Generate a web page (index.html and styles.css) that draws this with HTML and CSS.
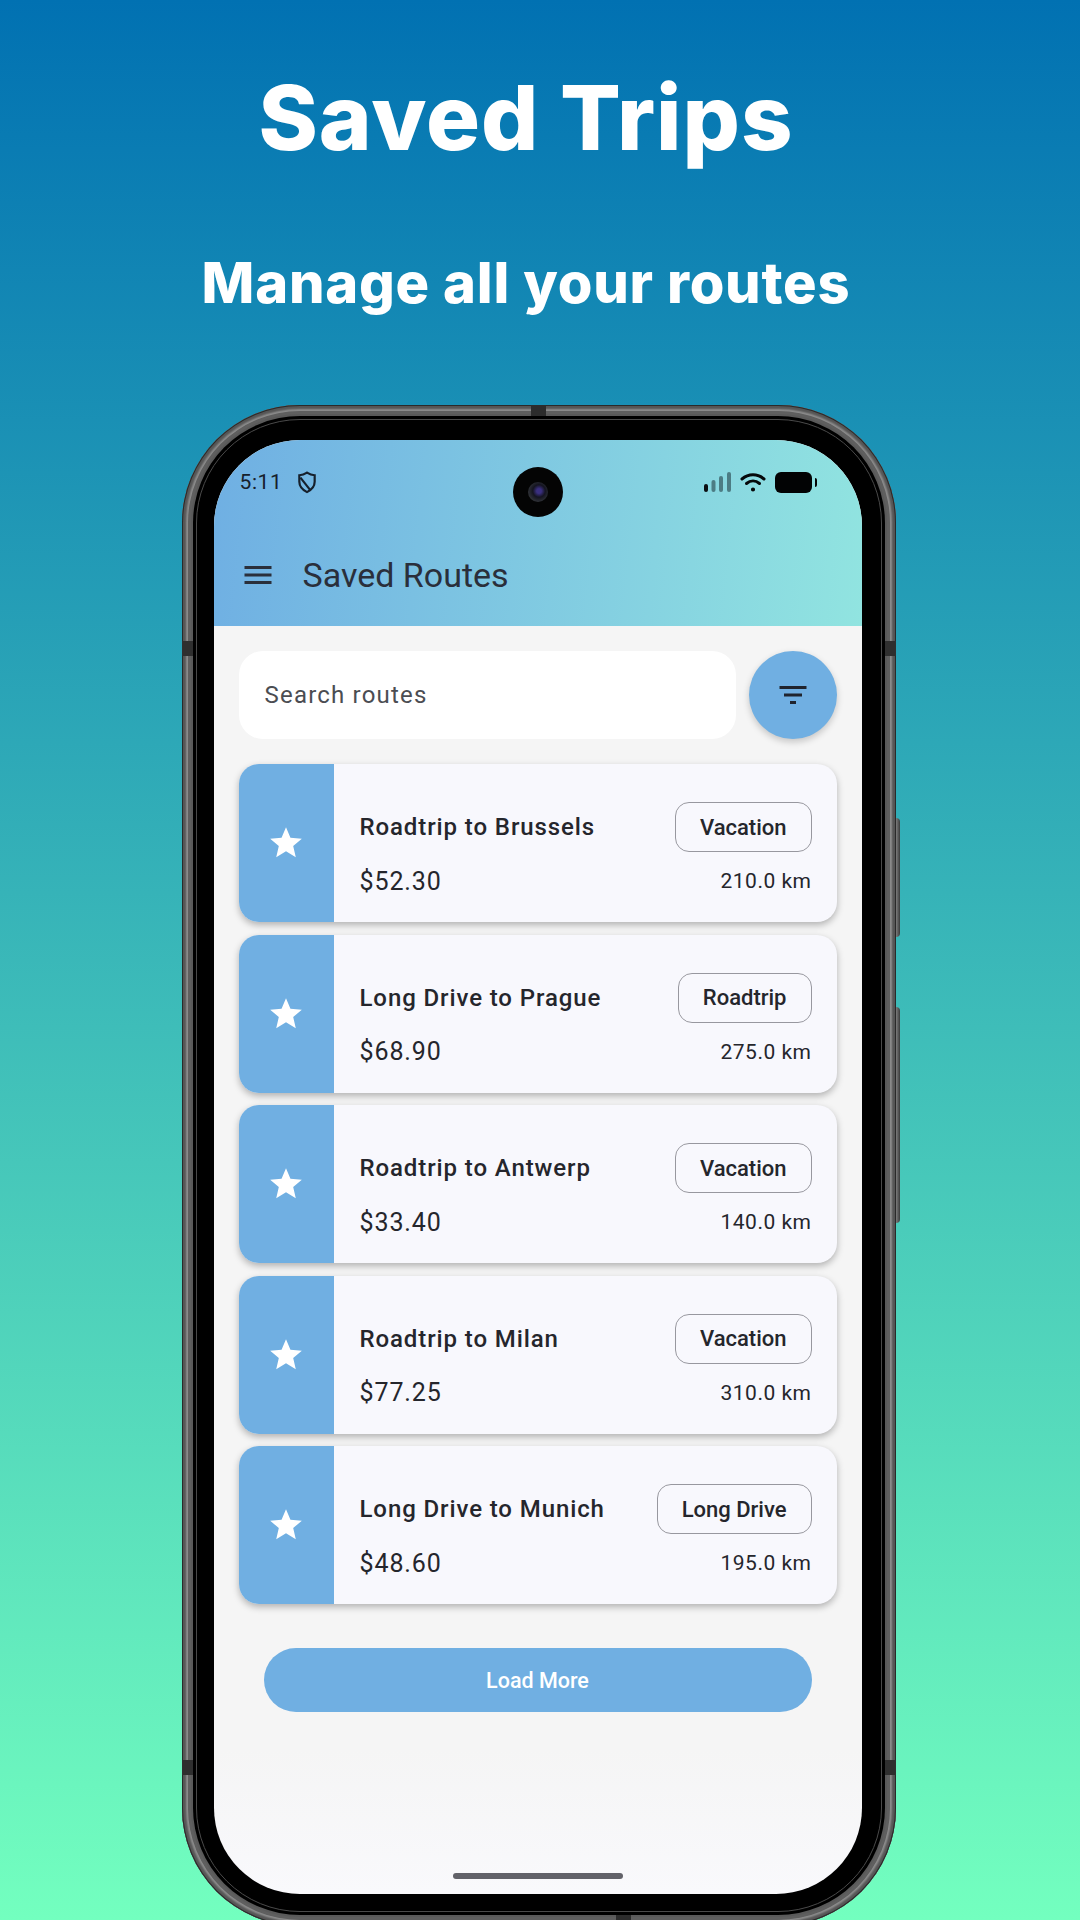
FILE: index.html
```html
<!DOCTYPE html>
<html lang="en">
<head>
  <meta charset="UTF-8">
  <title>Saved Trips</title>
  <link rel="stylesheet" href="styles.css">
</head>
<body>

  <header class="hero">
    <h1>Saved Trips</h1>
    <h2>Manage all your routes</h2>
  </header>

  <div class="phone">
    <span class="notch notch-top"></span>
    <span class="notch notch-bottom"></span>
    <span class="band-break break-left-top"></span>
    <span class="band-break break-right-top"></span>
    <span class="band-break break-left-bottom"></span>
    <span class="band-break break-right-bottom"></span>
    <span class="side-btn btn-power"></span>
    <span class="side-btn btn-volume"></span>

    <div class="bezel">
      <div class="screen">
        <span class="camera"><span class="lens"></span></span>

        <div class="appbar">
          <div class="status">
            <div class="status-left">
              <span class="clock">5:11</span>
              <svg class="shield" viewBox="0 0 18 21" width="20" height="23" fill="none" stroke="#16202c" stroke-width="2">
                <path d="M9 1.5c2.4 1.5 4.6 2.2 7 2.4v6c0 4.300-2.800 7.300-7 9.400-4.200-2.100-7-5.100-7-9.400v-6c2.400-.2 4.600-.9 7-2.400z"/>
                <path d="M3 6l9 11.500"/>
              </svg>
            </div>
            <div class="status-right">
              <svg viewBox="0 0 27 20" width="27" height="20">
                <rect x="0" y="12" width="4" height="8" rx="2" fill="#0b0f12"/>
                <rect x="7.500" y="8" width="4" height="12" rx="2" fill="#4c7c84"/>
                <rect x="15" y="4" width="4" height="16" rx="2" fill="#4c7c84"/>
                <rect x="23" y="0" width="4" height="20" rx="2" fill="#4c7c84"/>
              </svg>
              <svg viewBox="0 0 26 20" width="26" height="20" fill="none" stroke="#05080a" stroke-width="3" stroke-linecap="round">
                <path d="M2 7c6.500-5.600 15.500-5.600 22 0"/>
                <path d="M6.500 11.500c4-3.300 9-3.300 13 0"/>
                <circle cx="13" cy="17.500" r="1.300" fill="#05080a" stroke-width="1.600"/>
              </svg>
              <span class="battery"></span>
            </div>
          </div>
          <div class="toolbar">
            <svg viewBox="0 0 24 24" width="36" height="36" fill="#2a2f3b">
              <path d="M3 18h18v-2H3v2zm0-5h18v-2H3v2zm0-7v2h18V6H3z"/>
            </svg>
            <span class="toolbar-title">Saved Routes</span>
          </div>
        </div>

        <main class="content">
          <div class="search-row">
            <div class="search">Search routes</div>
            <button class="filter-btn">
              <svg viewBox="0 0 24 24" width="36" height="36" fill="#20242e">
                <path d="M10 18h4v-2h-4v2zM3 6v2h18V6H3zm3 7h12v-2H6v2z"/>
              </svg>
            </button>
          </div>

          <div class="route-list">
            <div class="route-card">
              <div class="route-mark">
                <svg viewBox="0 0 24 24" width="38" height="38" fill="#fff"><path d="M12 17.270L18.180 21l-1.640-7.030L22 9.240l-7.190-.61L12 2 9.190 8.630 2 9.240l5.460 4.730L5.820 21z"/></svg>
              </div>
              <div class="route-body">
                <div class="route-row">
                  <span class="route-name">Roadtrip to Brussels</span>
                  <span class="chip">Vacation</span>
                </div>
                <div class="route-row route-row-low">
                  <span class="route-price">$52.30</span>
                  <span class="route-dist">210.0 km</span>
                </div>
              </div>
            </div>

            <div class="route-card">
              <div class="route-mark">
                <svg viewBox="0 0 24 24" width="38" height="38" fill="#fff"><path d="M12 17.270L18.180 21l-1.640-7.030L22 9.240l-7.190-.61L12 2 9.190 8.630 2 9.240l5.460 4.730L5.820 21z"/></svg>
              </div>
              <div class="route-body">
                <div class="route-row">
                  <span class="route-name">Long Drive to Prague</span>
                  <span class="chip">Roadtrip</span>
                </div>
                <div class="route-row route-row-low">
                  <span class="route-price">$68.90</span>
                  <span class="route-dist">275.0 km</span>
                </div>
              </div>
            </div>

            <div class="route-card">
              <div class="route-mark">
                <svg viewBox="0 0 24 24" width="38" height="38" fill="#fff"><path d="M12 17.270L18.180 21l-1.640-7.030L22 9.240l-7.190-.61L12 2 9.190 8.630 2 9.240l5.460 4.730L5.820 21z"/></svg>
              </div>
              <div class="route-body">
                <div class="route-row">
                  <span class="route-name">Roadtrip to Antwerp</span>
                  <span class="chip">Vacation</span>
                </div>
                <div class="route-row route-row-low">
                  <span class="route-price">$33.40</span>
                  <span class="route-dist">140.0 km</span>
                </div>
              </div>
            </div>

            <div class="route-card">
              <div class="route-mark">
                <svg viewBox="0 0 24 24" width="38" height="38" fill="#fff"><path d="M12 17.270L18.180 21l-1.640-7.030L22 9.240l-7.190-.61L12 2 9.190 8.630 2 9.240l5.460 4.730L5.820 21z"/></svg>
              </div>
              <div class="route-body">
                <div class="route-row">
                  <span class="route-name">Roadtrip to Milan</span>
                  <span class="chip">Vacation</span>
                </div>
                <div class="route-row route-row-low">
                  <span class="route-price">$77.25</span>
                  <span class="route-dist">310.0 km</span>
                </div>
              </div>
            </div>

            <div class="route-card">
              <div class="route-mark">
                <svg viewBox="0 0 24 24" width="38" height="38" fill="#fff"><path d="M12 17.270L18.180 21l-1.640-7.030L22 9.240l-7.190-.61L12 2 9.190 8.630 2 9.240l5.460 4.730L5.820 21z"/></svg>
              </div>
              <div class="route-body">
                <div class="route-row">
                  <span class="route-name">Long Drive to Munich</span>
                  <span class="chip">Long Drive</span>
                </div>
                <div class="route-row route-row-low">
                  <span class="route-price">$48.60</span>
                  <span class="route-dist">195.0 km</span>
                </div>
              </div>
            </div>
          </div>

          <button class="load-more">Load More</button>
        </main>

        <span class="home-bar"></span>
      </div>
    </div>
  </div>

</body>
</html>
```

FILE: styles.css
```css
html, body {
  margin: 0;
  padding: 0;
}

body {
  width: 1080px;
  height: 1920px;
  overflow: hidden;
  display: flex;
  flex-direction: column;
  align-items: center;
  background: linear-gradient(180deg, #0171b2 0%, #73ffbf 100%);
  font-family: Roboto, "Liberation Sans", sans-serif;
}

/* top heading */
.hero {
  height: 405px;
  padding-right: 28px;
  flex-shrink: 0;
  text-align: center;
  color: #fff;
  font-family: Inter, "Noto Sans", sans-serif;
}

.hero h1 {
  margin: 0;
  padding-top: 64px;
  font-size: 90px;
  line-height: 108px;
  font-weight: 800;
  letter-spacing: 1px;
}

.hero h2 {
  margin: 0;
  padding-top: 77px;
  font-size: 56px;
  line-height: 68px;
  font-weight: 800;
  letter-spacing: 0.8px;
}

/* phone body */
.phone {
  position: relative;
  flex-shrink: 0;
  width: 714px;
  height: 1521px;
  margin-right: 3px;
  padding: 11px;
  box-sizing: border-box;
  border-radius: 118px;
  background: #5a5a5a;
  box-shadow:
    inset 0 0 0 1px #2a2a2a,
    inset 0 0 2px 4px #555,
    inset 0 0 0 6px #8e8e8e,
    inset 0 0 0 9px #5f5f5f;
}

.bezel {
  position: relative;
  height: 100%;
  padding: 24px 21px 21px;
  box-sizing: border-box;
  border-radius: 107px;
  background: #000;
}

.bezel::before {
  content: "";
  position: absolute;
  inset: 3px;
  border: 1px solid #4a4a4a;
  border-radius: 104px;
}

.notch {
  position: absolute;
  width: 15px;
  height: 12px;
  background: #2c2c2c;
}

.notch-top {
  top: 0;
  left: 349px;
}

.notch-bottom {
  bottom: 0;
  left: 434px;
}

.band-break {
  position: absolute;
  width: 11px;
  height: 15px;
  background: #2f2f2f;
}

.break-left-top {
  top: 236px;
  left: 0;
}

.break-right-top {
  top: 236px;
  right: 0;
}

.break-left-bottom {
  top: 1355px;
  left: 0;
}

.break-right-bottom {
  top: 1355px;
  right: 0;
}

.side-btn {
  position: absolute;
  right: -4px;
  width: 4px;
  border-radius: 0 4px 4px 0;
  background: linear-gradient(90deg, #7d7d7d, #3a3a3a);
}

.btn-power {
  top: 413px;
  height: 119px;
}

.btn-volume {
  top: 602px;
  height: 216px;
}

/* screen */
.screen {
  position: relative;
  width: 648px;
  height: 1454px;
  overflow: hidden;
  border-radius: 86px;
  background: linear-gradient(180deg, #f5f5f5 90%, #f9f9fc 100%);
}

.camera {
  position: absolute;
  top: 27px;
  left: 299px;
  width: 50px;
  height: 50px;
  display: flex;
  align-items: center;
  justify-content: center;
  border-radius: 50%;
  background: #040404;
}

.lens {
  width: 20px;
  height: 20px;
  border-radius: 50%;
  background: radial-gradient(circle at 55% 45%, #3a2f80 0 15%, #141420 40%, #33363a 75%, #0a0a0a 100%);
}

.appbar {
  height: 186px;
  box-sizing: border-box;
  background: linear-gradient(96deg, #6fafe3 0%, #91e4e0 100%);
}

.status {
  height: 84px;
  padding: 0 50px 0 26px;
  display: flex;
  justify-content: space-between;
  align-items: flex-end;
  box-sizing: border-box;
}

.status-left {
  display: flex;
  align-items: center;
  gap: 15px;
  height: 32px;
  margin-bottom: 26px;
}

.clock {
  font-size: 21px;
  letter-spacing: 0.6px;
  color: #16202c;
}

.status-right {
  display: flex;
  align-items: center;
  gap: 9px;
  height: 32px;
  margin-bottom: 26px;
}

.battery {
  position: relative;
  width: 37px;
  height: 21px;
  border-radius: 6px;
  background: #020304;
}

.battery::after {
  content: "";
  position: absolute;
  top: 6px;
  right: -5px;
  width: 2px;
  height: 9px;
  border-radius: 0 2px 2px 0;
  background: #020304;
}

.toolbar {
  height: 102px;
  padding: 0 0 0 26px;
  display: flex;
  align-items: center;
  gap: 27px;
  box-sizing: border-box;
}

.toolbar-title {
  font-size: 34px;
  color: #2a2f3b;
}

.content {
  padding: 25px;
}

.search-row {
  display: flex;
  justify-content: space-between;
}

.search {
  width: 497px;
  height: 88px;
  padding-left: 26px;
  display: flex;
  align-items: center;
  box-sizing: border-box;
  border-radius: 24px;
  background: #fff;
  font-size: 24px;
  letter-spacing: 1.2px;
  color: #4b4d52;
}

.filter-btn {
  width: 88px;
  height: 88px;
  padding: 0;
  display: flex;
  align-items: center;
  justify-content: center;
  border: none;
  border-radius: 50%;
  background: #70afe2;
  box-shadow: 0 3px 7px rgba(0, 0, 0, 0.2);
}

/* route cards */
.route-list {
  display: flex;
  flex-direction: column;
  gap: 12.5px;
  margin-top: 25px;
}

.route-card {
  height: 158px;
  display: flex;
  overflow: hidden;
  border-radius: 20px;
  background: #f8f8fd;
  box-shadow: 0 3px 7px rgba(0, 0, 0, 0.28);
}

.route-mark {
  width: 95px;
  display: flex;
  align-items: center;
  justify-content: center;
  background: #70afe2;
}

.route-body {
  flex: 1;
  padding: 38px 25px 0 26px;
}

.route-row {
  display: flex;
  justify-content: space-between;
  align-items: center;
  height: 50px;
}

.route-row-low {
  height: 30px;
  margin-top: 14px;
}

.route-name {
  font-size: 24px;
  font-weight: 480;
  letter-spacing: 0.9px;
  color: #25262c;
}

.chip {
  padding: 0 24px;
  height: 50px;
  display: flex;
  align-items: center;
  box-sizing: border-box;
  border: 1.5px solid #98989f;
  border-radius: 14px;
  font-size: 22px;
  font-weight: 480;
  color: #25262c;
}

.route-price {
  font-size: 25px;
  letter-spacing: 0.9px;
  color: #25262c;
}

.route-dist {
  font-size: 21px;
  letter-spacing: 0.5px;
  color: #25262c;
}

.load-more {
  display: block;
  width: 548px;
  height: 64px;
  margin: 44px auto 0;
  border: none;
  border-radius: 32px;
  background: #70afe2;
  font-family: inherit;
  font-size: 21.5px;
  font-weight: 480;
  color: #fff;
}

.home-bar {
  position: absolute;
  left: 239px;
  bottom: 15px;
  width: 170px;
  height: 6px;
  border-radius: 3px;
  background: #626269;
}
```
